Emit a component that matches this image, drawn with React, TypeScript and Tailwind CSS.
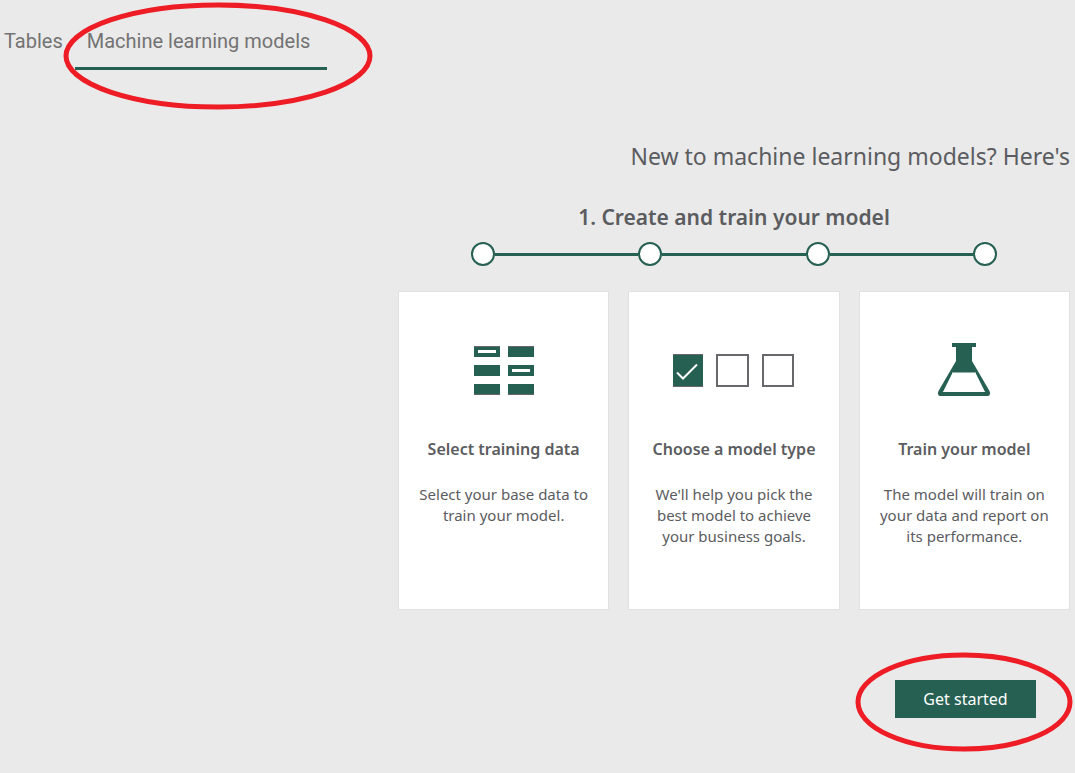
import type { ReactNode } from "react";

function DataIcon() {
  return (
    <svg width="60" height="50" viewBox="0 -1 60 50" aria-hidden="true">
      <g fill="#266052">
        <rect x="0" y="0" width="26" height="11" />
        <rect x="34" y="0" width="26" height="11" />
        <rect x="0" y="19" width="26" height="11" />
        <rect x="34" y="19" width="26" height="11" />
        <rect x="0" y="38" width="26" height="11" />
        <rect x="34" y="38" width="26" height="11" />
      </g>
      <path d="M0 .5h26M34 .5h26M0 48.5h26M34 48.5h26" stroke="#69666c" />
      <rect x="4" y="4" width="18" height="3" fill="#fff" />
      <rect x="38" y="23" width="18" height="3" fill="#fff" />
    </svg>
  );
}

function ChoiceIcon() {
  return (
    <svg width="121" height="33" viewBox="0 0 121 33" aria-hidden="true">
      <rect width="30" height="33" fill="#266052" />
      <path d="M0 .5h30M0 32.5h30" stroke="#69666c" />
      <path d="M4 18.500l6 6L24 10.500" fill="none" stroke="#fff" strokeWidth="2" />
      <g fill="#fff" stroke="#69666c" strokeWidth="2">
        <rect x="44" y="1" width="31" height="31" />
        <rect x="90" y="1" width="30" height="31" />
      </g>
    </svg>
  );
}

function FlaskIcon() {
  return (
    <svg width="54" height="54" viewBox="0 0 54 54" aria-hidden="true">
      <path
        d="M15 0h24v4h-4v14l17.500 30q2 5-3 5h-45q-5 0-3-5L19 18V4h-4zM15 29.500L5.500 49h43L39 29.500z"
        fill="#266052"
        fillRule="evenodd"
      />
      <path d="M14.500 29.500L5 48.500M39.500 29.500L49 48.500" stroke="#266052" strokeWidth="2" />
    </svg>
  );
}

const cards: { title: string; text: string; icon: ReactNode }[] = [
  { title: "Select training data", text: "Select your base data to train your model.", icon: <DataIcon /> },
  { title: "Choose a model type", text: "We'll help you pick the best model to achieve your business goals.", icon: <ChoiceIcon /> },
  { title: "Train your model", text: "The model will train on your data and report on its performance.", icon: <FlaskIcon /> },
];

function Dot() {
  return <span className="size-6 shrink-0 rounded-full border-2 border-[#266052] bg-white" />;
}

function Line() {
  return <span className="h-[3px] flex-1 bg-[#266052]" />;
}

export default function App() {
  return (
    <div className="min-h-screen overflow-x-hidden bg-[#eaeaea] font-['Noto_Sans',sans-serif] text-[#5b5c60]">
      <nav className="flex gap-3 pt-3 pl-1 font-['Roboto',sans-serif] text-[20px] leading-6 text-[#737373]">
        <a href="#tables" className="pt-[17px]">Tables</a>
        <div className="relative">
          <a href="#models" className="block min-w-[252px] border-b-3 border-[#266052] px-3 pt-[17px] pb-[14px]">
            Machine learning models
          </a>
          <svg className="pointer-events-none absolute -top-[10px] -left-3 h-[108px] w-[310px]" viewBox="0 0 310 108" aria-hidden="true">
            <ellipse cx="155" cy="54" rx="152" ry="51" fill="none" stroke="#ee1c25" strokeWidth="5" />
          </svg>
        </div>
      </nav>

      <main className="pt-[70px] pr-[5px] pl-[398px]">
        <h1 className="text-right text-[23px] leading-8">New to machine learning models? Here's</h1>
        <h2 className="mt-[29px] text-center text-[21px] leading-8 font-semibold">1. Create and train your model</h2>
        <div className="mx-[73px] mt-[9px] flex items-center">
          <Dot />
          <Line />
          <Dot />
          <Line />
          <Dot />
          <Line />
          <Dot />
        </div>
        <div className="mt-[25px] grid grid-cols-3 gap-[19px]">
          {cards.map((card) => (
            <section key={card.title} className="flex min-h-[319px] flex-col items-center border border-[#dfe2e0] bg-white px-4 pt-[38px] text-center">
              <div className="flex h-20 items-center">{card.icon}</div>
              <h3 className="mt-[27px] text-[16px] leading-6 font-semibold whitespace-nowrap">{card.title}</h3>
              <p className="mt-[23px] text-[15px] leading-[21px]">{card.text}</p>
            </section>
          ))}
        </div>
        <div className="mt-[70px] mr-[34px] flex justify-end">
          <div className="relative">
            <button type="button" className="h-[38px] w-[141px] bg-[#266052] text-[16px] text-white">Get started</button>
            <svg className="pointer-events-none absolute -top-7 -left-10 h-[100px] w-[218px]" viewBox="0 0 218 100" aria-hidden="true">
              <ellipse cx="109" cy="50" rx="106" ry="47" fill="none" stroke="#ee1c25" strokeWidth="5" />
            </svg>
          </div>
        </div>
      </main>
    </div>
  );
}
